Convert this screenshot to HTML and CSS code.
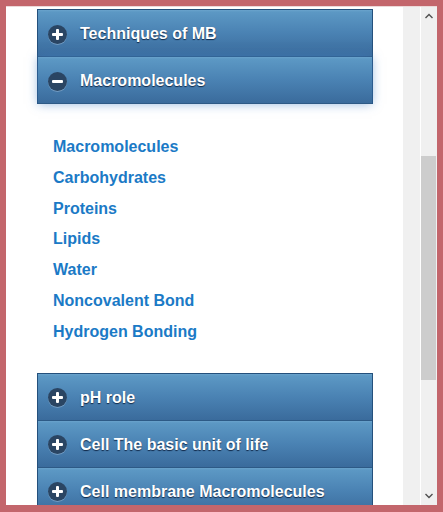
FILE: index.html
```html
<!DOCTYPE html>
<html>
<head>
<meta charset="utf-8">
<link rel="stylesheet" href="styles.css">
</head>
<body>
<div class="frame">
  <div class="viewport">
    <div class="page">
      <div class="accordion top-acc">
        <div class="item"><span class="icon plus"></span><span class="label">Techniques of MB</span></div>
        <div class="item active"><span class="icon minus"></span><span class="label">Macromolecules</span></div>
      </div>
      <ul class="links">
        <li><a href="#">Macromolecules</a></li>
        <li><a href="#">Carbohydrates</a></li>
        <li><a href="#">Proteins</a></li>
        <li><a href="#">Lipids</a></li>
        <li><a href="#">Water</a></li>
        <li><a href="#">Noncovalent Bond</a></li>
        <li><a href="#">Hydrogen Bonding</a></li>
      </ul>
      <div class="accordion">
        <div class="item"><span class="icon plus"></span><span class="label">pH role</span></div>
        <div class="item"><span class="icon plus"></span><span class="label">Cell The basic unit of life</span></div>
        <div class="item"><span class="icon plus"></span><span class="label">Cell membrane Macromolecules</span></div>
      </div>
    </div>
    <div class="gutter"></div>
    <div class="scrollbar">
      <svg class="arrow up" width="16" height="16" viewBox="0 0 16 16"><path d="M4.5 10 L8 6.5 L11.5 10" fill="none" stroke="#505050" stroke-width="1.4"/></svg>
      <div class="track"><div class="thumb"></div></div>
      <svg class="arrow down" width="16" height="16" viewBox="0 0 16 16"><path d="M4.5 6 L8 9.5 L11.5 6" fill="none" stroke="#505050" stroke-width="1.4"/></svg>
    </div>
  </div>
</div>
</body>
</html>
```
FILE: styles.css
```css
html, body {
  margin: 0;
  padding: 0;
}
body {
  width: 443px;
  height: 512px;
  overflow: hidden;
  font-family: "Liberation Sans", Arial, sans-serif;
}
.frame {
  box-sizing: border-box;
  width: 443px;
  height: 512px;
  border: 6px solid #c3666c;
  border-bottom-width: 7px;
  background: #fff;
}
.viewport {
  display: flex;
  height: 100%;
  overflow: hidden;
  border-top: 1px solid #ecd9d9;
  box-sizing: border-box;
}
.page {
  width: 397px;
  flex: none;
  background: #fff;
  padding-top: 2px;
  overflow: hidden;
}
.gutter {
  width: 17px;
  flex: none;
  background: #f0f0f0;
  border-right: 1px solid #fff;
}
.scrollbar {
  width: 16px;
  flex: none;
  background: #f0f0f0;
  display: flex;
  flex-direction: column;
}
.arrow {
  display: block;
  flex: none;
}
.up { margin-top: 1px; }
.track {
  flex: 1;
  padding-top: 132px;
}
.thumb {
  width: 15px;
  height: 224px;
  background: #cdcdcd;
}
.down { margin-bottom: 1px; }

.accordion {
  margin-left: 31px;
  width: 334px;
  border-left: 1px solid #24507c;
  border-right: 1px solid #24507c;
  border-top: 1px solid #24507c;
}
.item {
  box-sizing: border-box;
  height: 47px;
  display: flex;
  align-items: center;
  padding-left: 10px;
  padding-top: 2px;
  background: linear-gradient(to bottom, #6aa3cc 0, #5c98c4 2px, #4a82b3 50%, #3a6b9c 100%);
  border-bottom: 1px solid #2d5a86;
  color: #fff;
  font-size: 16px;
  font-weight: bold;
  text-shadow: 0 1px 1px rgba(10, 30, 60, 0.9);
}
.item.active {
  box-shadow: 0 0 10px rgba(70, 130, 200, 0.55);
  position: relative;
}
.icon {
  width: 19px;
  height: 19px;
  border-radius: 50%;
  background: #2a4563;
  box-shadow: 0 1px 0 rgba(200, 220, 240, 0.35);
  position: relative;
  flex: none;
  margin-right: 13px;
}
.icon::before, .icon::after {
  content: "";
  position: absolute;
  background: #fff;
  border-radius: 1px;
}
.icon::before {
  left: 4px;
  top: 8px;
  width: 11px;
  height: 3px;
}
.plus::after {
  left: 8px;
  top: 4px;
  width: 3px;
  height: 11px;
}
.links {
  list-style: none;
  margin: 0;
  padding: 28px 0 25px 47px;
}
.links li {
  line-height: 30.8px;
  font-size: 16px;
  font-weight: bold;
}
.links a {
  color: #1b7ac6;
  text-decoration: none;
}
```
